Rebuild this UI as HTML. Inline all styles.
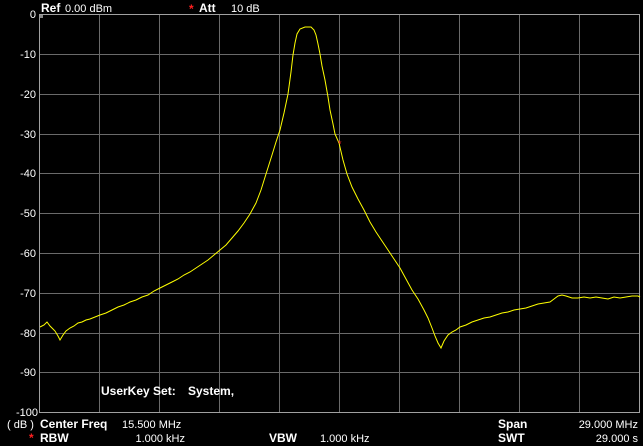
<!DOCTYPE html>
<html><head><style>
html,body{margin:0;padding:0;background:#000;width:643px;height:446px;overflow:hidden}
svg{display:block}
text{font-family:"Liberation Sans",sans-serif;fill:#fff}
</style></head><body>
<svg width="643" height="446" viewBox="0 0 643 446">
<rect width="643" height="446" fill="#000"/>
<g stroke="#6a6a6a" stroke-width="1" fill="none">
<path d="M99.5 14V412M159.5 14V412M219.5 14V412M279.5 14V412M339.5 14V412M399.5 14V412M459.5 14V412M519.5 14V412M579.5 14V412"/>
<path d="M39 54.5H640M39 94.5H640M39 134.5H640M39 173.5H640M39 213.5H640M39 253.5H640M39 293.5H640M39 333.5H640M39 372.5H640"/>
</g>
<rect x="39.5" y="14.5" width="600" height="398" stroke="#a0a0a0" fill="none"/>
<rect x="40" y="15" width="3" height="3" fill="#888"/>
<g font-size="11" text-anchor="end">
<text x="36" y="18">0</text><text x="36" y="58">-10</text><text x="36" y="98">-20</text><text x="36" y="138">-30</text><text x="36" y="177">-40</text><text x="36" y="217">-50</text><text x="36" y="257">-60</text><text x="36" y="297">-70</text><text x="36" y="337">-80</text><text x="36" y="376">-90</text><text x="38" y="416">-100</text>
</g>
<text x="7" y="428" font-size="11">( dB )</text>
<polyline fill="none" stroke="#ffff00" stroke-width="1" points="40,327 44,325 47,322 50,326 53,329 55,331 58,336 60,340 63,335 66,331 70,328 74,326 78,323 82,322 86,320 90,319 95,317 100,315 106,313 112,310 118,307 124,305 130,302 136,300 142,297 148,295 154,291 160,288 166,285 172,282 178,279 184,275 190,272 196,268 202,264 208,260 214,255 220,250 226,245 232,238 238,231 244,223 250,214 256,203 261,190 266,174 272,155 276,142 280,130 284,113 288,94 291,72 293,55 295,43 297,34 300,29 305,27 311,27 314,30 316,35 318,44 320,54 322,66 325,80 328,97 330,110 333,124 335,134 339,143 343,160 347,174 352,187 358,199 364,210 370,222 376,232 382,241 388,250 394,259 400,268 406,279 412,290 418,299 424,310 428,318 432,328 435,336 438,343 441,348 444,341 448,335 452,332 456,330 460,327 466,325 472,322 478,320 484,318 490,317 496,315 502,313 508,312 514,310 520,309 526,308 532,306 538,304 544,303 550,302 554,299 558,296 562,295 566,296 572,298 578,298 584,297 590,298 596,297 602,298 608,299 614,297 620,298 626,297 632,296 638,296 640,297"/>
<text x="338" y="147" font-size="9" fill="#ff2020" style="fill:#ff2020">*</text>
<g font-size="12">
<text x="41" y="12" font-weight="bold">Ref</text><text x="65" y="12" font-size="11">0.00 dBm</text>
<text x="189" y="13" style="fill:#ff2020" font-weight="bold">*</text><text x="199" y="12" font-weight="bold">Att</text><text x="231" y="12" font-size="11">10 dB</text>
<text x="101" y="395" font-weight="bold">UserKey Set:</text><text x="188" y="395" font-weight="bold">System,</text>
<text x="40" y="428" font-weight="bold">Center Freq</text><text x="122" y="428" font-size="11">15.500 MHz</text>
<text x="498" y="428" font-weight="bold">Span</text><text x="638" y="428" font-size="11" text-anchor="end">29.000 MHz</text>
<text x="29" y="442" style="fill:#ff2020" font-weight="bold">*</text><text x="40" y="442" font-weight="bold">RBW</text><text x="185" y="442" font-size="11" text-anchor="end">1.000 kHz</text>
<text x="269" y="442" font-weight="bold">VBW</text><text x="320" y="442" font-size="11">1.000 kHz</text>
<text x="498" y="442" font-weight="bold">SWT</text><text x="638" y="442" font-size="11" text-anchor="end">29.000 s</text>
</g>
</svg>
</body></html>
